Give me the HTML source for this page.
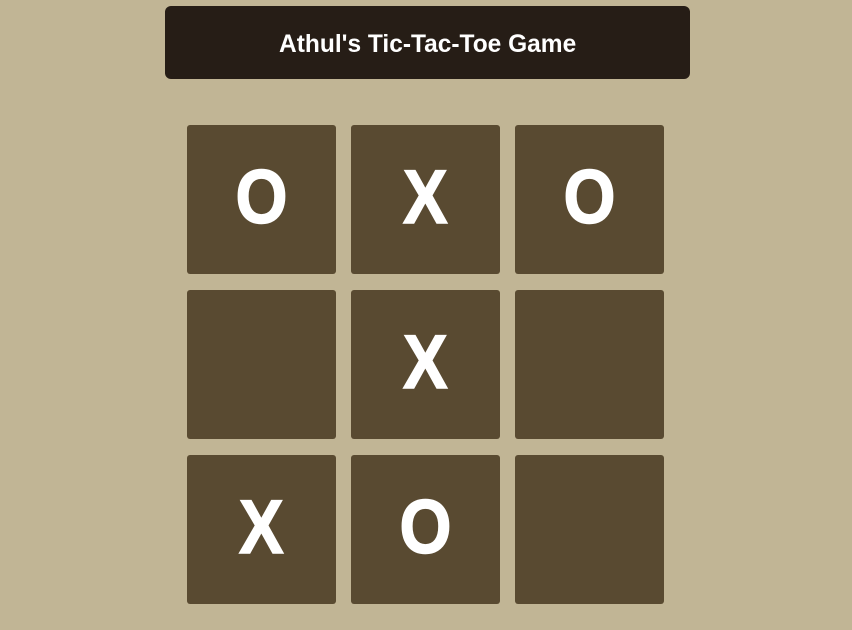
<!DOCTYPE html>
<html><head><style>
body{margin:0;width:852px;height:630px;background:#c1b595;position:relative;overflow:hidden;font-family:"Liberation Sans",sans-serif;}
.h{position:absolute;left:165px;top:6px;width:525px;height:73px;background:#261d16;border-radius:6px;color:#fff;font-weight:bold;font-size:25px;line-height:77px;text-align:center;}
.h span{display:inline-block;transform:scaleX(0.98);}
.c{position:absolute;width:149px;height:149px;background:#594a31;border-radius:3px;color:#fff;font-weight:bold;font-size:76px;line-height:146px;text-align:center;}
.c span{display:inline-block;transform:scaleX(0.88);-webkit-text-stroke:1.5px #fff;}
</style></head><body>
<div class="h"><span>Athul's Tic-Tac-Toe Game</span></div>
<div class="c" style="left:187px;top:125px"><span>O</span></div>
<div class="c" style="left:351px;top:125px"><span>X</span></div>
<div class="c" style="left:515px;top:125px"><span>O</span></div>
<div class="c" style="left:187px;top:290px"></div>
<div class="c" style="left:351px;top:290px"><span>X</span></div>
<div class="c" style="left:515px;top:290px"></div>
<div class="c" style="left:187px;top:455px"><span>X</span></div>
<div class="c" style="left:351px;top:455px"><span>O</span></div>
<div class="c" style="left:515px;top:455px"></div>
</body></html>
